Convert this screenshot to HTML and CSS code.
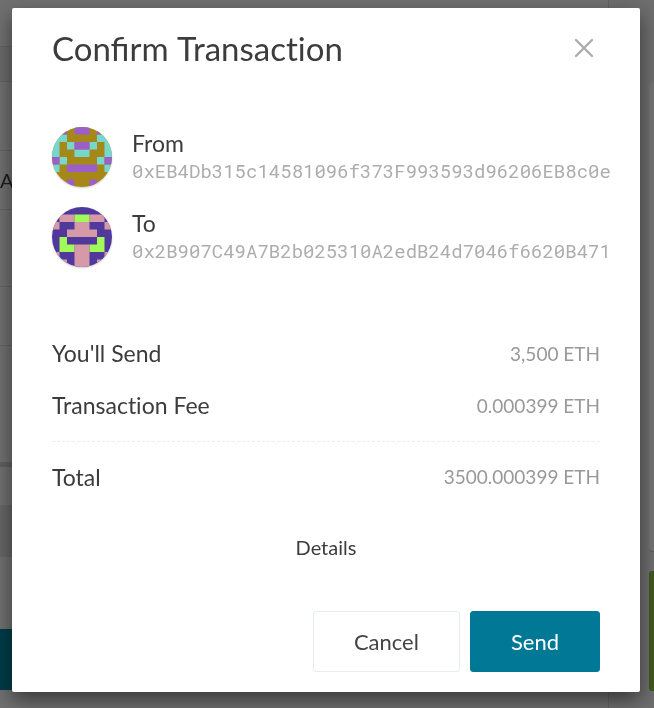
FILE: index.html
```html
<!DOCTYPE html>
<html lang="en">
<head>
<meta charset="utf-8">
<meta name="viewport" content="width=device-width, initial-scale=1">
<title>Confirm Transaction</title>
<link rel="stylesheet" href="styles.css">
</head>
<body>
<div class="page" aria-hidden="true">
  <div class="page-main">
    <div class="strip strip-top"></div>
    <div class="strip strip-bar"></div>
    <div class="strip strip-head"></div>
    <div class="strip strip-row">A</div>
    <div class="strip strip-field"></div>
    <div class="strip strip-row"></div>
    <div class="strip strip-tall"></div>
    <div class="strip strip-gap"></div>
    <div class="strip strip-shade"></div>
    <div class="strip strip-space"></div>
    <div class="strip strip-action"></div>
  </div>
  <div class="page-side">
    <div class="side-card"></div>
    <div class="side-promo"></div>
  </div>
</div>

<main class="modal" role="dialog" aria-modal="true" aria-labelledby="title">
  <header class="modal-header">
    <h1 id="title">Confirm <span class="plain">Transaction</span></h1>
    <button class="close" type="button" aria-label="Close">
      <svg width="20" height="20" viewBox="0 0 20 20" fill="none" stroke="#adadad" stroke-width="2.4" stroke-linecap="round"><path d="M2 2 18 18M18 2 2 18"/></svg>
    </button>
  </header>

  <section class="parties">
    <div class="party">
      <svg class="avatar" viewBox="0 0 8 8">
        <path fill="#a58817" d="M0 0h8v8H0z"/>
        <path fill="#76d8cc" d="M0 1h2v1H0zM6 1h2v1H6zM0 2h1v2H0zM7 2h1v2H7zM2 2h1v1H2zM5 2h1v1H5zM3 3h2v1H3zM1 4h1v1H1zM6 4h1v1H6zM0 5h1v1H0zM7 5h1v1H7z"/>
        <path fill="#9c5fca" d="M1 0h1v1H1zM3 0h2v1H3zM6 0h1v1H6zM3 2h2v1H3zM0 4h1v1H0zM7 4h1v1H7zM2 5h4v1H2zM2 7h1v1H2zM5 7h1v1H5z"/>
      </svg>
      <div>
        <h2>From</h2>
        <p class="address">0xEB4Db315c14581096f373F993593d96206EB8c0e</p>
      </div>
    </div>
    <div class="party">
      <svg class="avatar" viewBox="0 0 8 8">
        <path fill="#51389d" d="M0 0h8v8H0z"/>
        <path fill="#d599a7" d="M1 1h2v1H1zM5 1h2v1H5zM0 2h1v1H0zM7 2h1v1H7zM3 2h2v1H3zM2 3h4v1H2zM3 5h2v3H3zM0 6h1v1H0zM7 6h1v1H7zM1 7h1v1H1zM6 7h1v1H6z"/>
        <path fill="#a1fa57" d="M3 1h2v1H3zM1 4h1v1H1zM6 4h1v1H6zM1 5h2v1H1zM5 5h2v1H5z"/>
      </svg>
      <div>
        <h2>To</h2>
        <p class="address">0x2B907C49A7B2b025310A2edB24d7046f6620B471</p>
      </div>
    </div>
  </section>

  <dl class="amounts">
    <div class="amount"><dt>You'll Send</dt><dd>3,500 ETH</dd></div>
    <div class="amount"><dt>Transaction Fee</dt><dd>0.000399 ETH</dd></div>
    <div class="amount total"><dt>Total</dt><dd>3500.000399 ETH</dd></div>
  </dl>

  <button class="details" type="button">Details</button>

  <footer class="actions">
    <button class="btn" type="button">Cancel</button>
    <button class="btn btn-primary" type="button">Send</button>
  </footer>
</main>
</body>
</html>
```
FILE: styles.css
```css
* { box-sizing: border-box; }

body {
  margin: 0;
  min-height: 100vh;
  padding: 8px 14px 16px 12px;
  background: #707070;
  color: #3c3c3c;
  font-family: Lato, "Liberation Sans", sans-serif;
}

h1, h2, p, dl, dd { margin: 0; font-weight: 400; }
button { font-family: inherit; cursor: pointer; }

/* Dimmed page behind the dialog */
.page {
  position: fixed;
  inset: 0;
  display: grid;
  grid-template-columns: 1fr 45px;
  overflow: hidden;
}
.page-main { border-right: 1px solid #626262; }
.strip { border-bottom: 1px solid #636363; }
.strip-top { height: 47px; }
.strip-bar { height: 35px; background: #6b6b6b; }
.strip-head { height: 69px; }
.strip-row {
  height: 59px;
  color: #1c1c1c;
  font-size: 20px;
  line-height: 59px;
}
.strip-field { height: 77px; }
.strip-tall { height: 121px; border-bottom: 5px solid #606060; }
.strip-gap { height: 38px; border: 0; }
.strip-shade { height: 52px; border: 0; background: #666; }
.strip-space { height: 72px; border: 0; }
.strip-action { height: 61px; border: 0; background: #003c4a; }

.page-side { padding: 82px 0 0 40px; background: #6e6e6e; }
.side-card {
  height: 470px;
  margin-bottom: 19px;
  border-bottom: 1px solid #5c5c5c;
  border-radius: 4px 0 0 4px;
  background: #737373;
}
.side-promo {
  height: 120px;
  border-radius: 3px 0 0 3px;
  background: #415a20;
}

/* Dialog */
.modal {
  position: relative;
  padding: 20px 40px;
  border-radius: 2px;
  background: #fff;
  box-shadow: 0 8px 20px rgba(0, 0, 0, 0.5);
}
.modal-header {
  display: flex;
  justify-content: space-between;
  align-items: center;
  height: 40px;
}
h1 { font-size: 33px; line-height: 40px; }
.plain, dt { font-variant-ligatures: none; }
.close {
  display: flex;
  padding: 6px;
  border: 0;
  background: none;
}

.parties {
  display: grid;
  gap: 20px;
  margin-top: 59px;
}
.party {
  display: flex;
  align-items: center;
  gap: 20px;
}
.avatar {
  flex: none;
  width: 60px;
  height: 60px;
  border-radius: 50%;
  box-shadow: 0 1px 2px rgba(0, 0, 0, 0.2);
}
h2 { font-size: 23px; line-height: 28px; }
.address {
  color: #adadad;
  font-family: "Roboto Mono", "Liberation Mono", monospace;
  font-size: 19px;
  line-height: 28px;
}

.amounts { margin-top: 60px; }
.amount {
  display: flex;
  justify-content: space-between;
  align-items: center;
  height: 52px;
}
dt { font-size: 23px; }
dd { color: #999; font-size: 19px; }
.total {
  height: 70px;
  margin-top: 10px;
  border-top: 1px dashed #ececec;
}

.details {
  display: block;
  margin: 16px auto 0;
  padding: 8px;
  border: 0;
  background: none;
  color: #3c3c3c;
  font-size: 20px;
  line-height: 24px;
}

.actions {
  display: flex;
  justify-content: flex-end;
  gap: 10px;
  margin-top: 44px;
}
.btn {
  padding: 0 40px;
  border: 1px solid #e5ecf3;
  border-radius: 3px;
  background: #fff;
  color: #444;
  font-size: 22px;
  line-height: 59px;
}
.btn-primary {
  border-color: #007896;
  background: #007896;
  color: #fff;
}
```
